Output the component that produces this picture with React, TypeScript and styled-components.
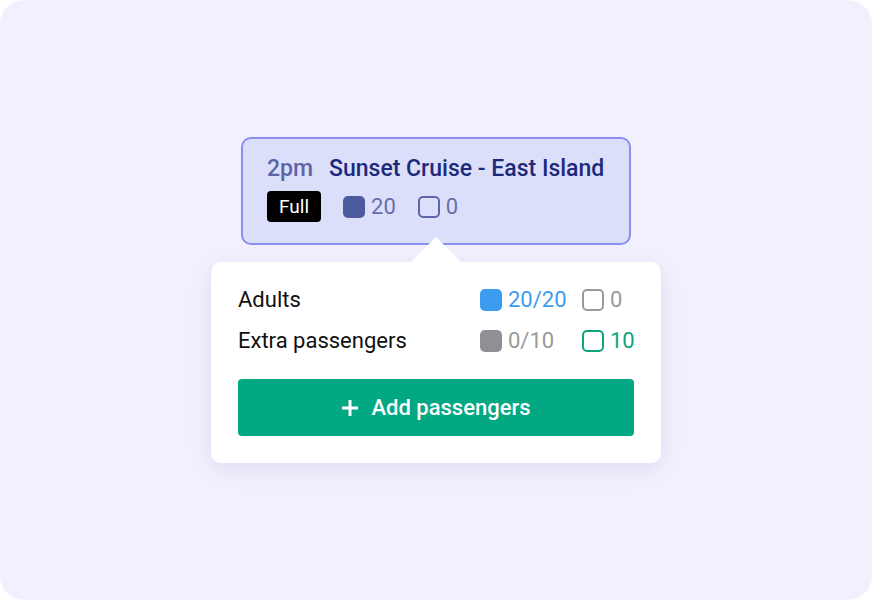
import React from 'react';
import styled, { createGlobalStyle } from 'styled-components';

const GlobalStyle = createGlobalStyle`
  html, body {
    margin: 0;
    padding: 0;
    background: #ffffff;
  }
  body {
    font-family: Roboto, "Noto Sans", Arial, sans-serif;
    -webkit-font-smoothing: antialiased;
  }
`;

const Page = styled.div`
  width: 872px;
  height: 600px;
  box-sizing: border-box;
  border-radius: 24px;
  background: #f3f0fd;
  display: flex;
  flex-direction: column;
  align-items: center;
  justify-content: center;
  gap: 17px;
`;

const EventCard = styled.div`
  width: 390px;
  box-sizing: border-box;
  padding: 16px 24px 21px;
  border: 2px solid #8a90ef;
  border-radius: 10px;
  background: #dcdffa;
  display: flex;
  flex-direction: column;
  gap: 8px;
`;

const TitleRow = styled.div`
  display: flex;
  align-items: center;
  gap: 16px;
  font-size: 23px;
  line-height: 28px;
  font-weight: 500;
  white-space: nowrap;
`;

const Time = styled.span`
  color: #5b66aa;
`;

const Title = styled.span`
  color: #1d2a7c;
`;

const StatusRow = styled.div`
  display: flex;
  align-items: center;
  gap: 22px;
`;

const Badge = styled.span`
  display: inline-flex;
  align-items: center;
  justify-content: center;
  height: 31px;
  padding: 0 12px;
  border-radius: 4px;
  background: #000000;
  color: #ffffff;
  font-size: 19px;
`;

const Count = styled.span<{ $color: string }>`
  display: inline-flex;
  align-items: center;
  gap: 6px;
  font-size: 22px;
  line-height: 28px;
  color: ${(p) => p.$color};
  white-space: nowrap;
`;

const Swatch = styled.span<{ $color: string; $filled?: boolean }>`
  display: inline-block;
  flex: none;
  width: 22px;
  height: 22px;
  box-sizing: border-box;
  border-radius: 5px;
  background: ${(p) => (p.$filled ? p.$color : 'transparent')};
  border: ${(p) => (p.$filled ? 'none' : `2px solid ${p.$color}`)};
`;

const Popover = styled.div`
  position: relative;
  width: 450px;
  box-sizing: border-box;
  padding: 24px 27px 27px;
  border-radius: 10px;
  background: #ffffff;
  box-shadow: 0 6px 24px rgba(90, 70, 170, 0.12);
`;

const Arrow = styled.span`
  position: absolute;
  left: 50%;
  top: -25px;
  transform: translateX(-50%);
  width: 0;
  height: 0;
  border-left: 25px solid transparent;
  border-right: 25px solid transparent;
  border-bottom: 25px solid #ffffff;
`;

const Table = styled.div`
  display: grid;
  grid-template-columns: 1fr 102px 52px;
  row-gap: 13px;
  align-items: center;
`;

const Label = styled.span`
  font-size: 22px;
  line-height: 28px;
  color: #111111;
`;

const AddButton = styled.button`
  margin-top: 24px;
  width: 100%;
  height: 57px;
  border: none;
  border-radius: 4px;
  background: #02a882;
  color: #ffffff;
  font-family: inherit;
  font-size: 22px;
  font-weight: 500;
  display: flex;
  align-items: center;
  justify-content: center;
  gap: 12px;
  cursor: pointer;
`;

const PlusIcon = () => (
  <svg width="18" height="18" viewBox="0 0 18 18" aria-hidden="true">
    <path d="M9 1v16M1 9h16" stroke="#ffffff" strokeWidth="3" strokeLinecap="butt" />
  </svg>
);

const rows = [
  {
    label: 'Adults',
    booked: '20/20',
    swatch: '#3d9cf0',
    bookedColor: '#3d9cf0',
    free: '0',
    freeColor: '#9a9a9a',
  },
  {
    label: 'Extra passengers',
    booked: '0/10',
    swatch: '#8e9093',
    bookedColor: '#9a9a9a',
    free: '10',
    freeColor: '#0fa47e',
  },
];

export default function App() {
  return (
    <>
      <GlobalStyle />
      <Page>
        <EventCard>
          <TitleRow>
            <Time>2pm</Time>
            <Title>Sunset Cruise - East Island</Title>
          </TitleRow>
          <StatusRow>
            <Badge>Full</Badge>
            <Count $color="#6670aa">
              <Swatch $color="#4d5aa0" $filled />
              20
            </Count>
            <Count $color="#6670aa">
              <Swatch $color="#5c67ab" />
              0
            </Count>
          </StatusRow>
        </EventCard>
        <Popover>
          <Arrow />
          <Table>
            {rows.map((r) => (
              <React.Fragment key={r.label}>
                <Label>{r.label}</Label>
                <Count $color={r.bookedColor}>
                  <Swatch $color={r.swatch} $filled />
                  {r.booked}
                </Count>
                <Count $color={r.freeColor}>
                  <Swatch $color={r.freeColor} />
                  {r.free}
                </Count>
              </React.Fragment>
            ))}
          </Table>
          <AddButton>
            <PlusIcon />
            Add passengers
          </AddButton>
        </Popover>
      </Page>
    </>
  );
}
